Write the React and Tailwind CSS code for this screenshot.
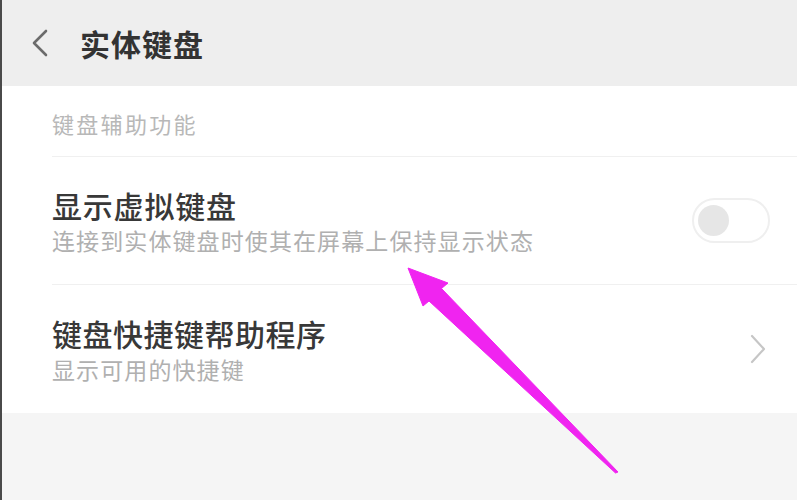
export default function App() {
	return (
		<div className="relative flex h-[500px] w-full flex-col overflow-hidden border-l-2 border-[#4a4a4a] bg-[#f5f5f5] font-['Noto_Sans_CJK_SC',sans-serif]">
			{/* header */}
			<div className="flex h-[86px] items-center bg-[#eeeeee] pl-[28px]">
				<svg width="20" height="30" viewBox="0 0 20 30" fill="none">
					<path d="M16 3 L4 15 L16 27" stroke="#6b6b6b" strokeWidth="2.6" strokeLinecap="round" strokeLinejoin="round" />
				</svg>
				<h1 className="ml-[30px] text-[30px] font-semibold tracking-[1px] text-[#333333]">实体键盘</h1>
			</div>

			<div className="bg-white">
				<div className="ml-[50px] flex h-[71px] items-center border-b border-[#f0f0f0] pt-[4px]">
					<span className="text-[22px] tracking-[2.3px] text-[#b8b8b8]">键盘辅助功能</span>
				</div>

				<div className="ml-[50px] flex h-[128px] items-center justify-between border-b border-[#f0f0f0] pr-[27px]">
					<div className="flex flex-col">
						<span className="text-[30px] font-medium leading-[36px] tracking-[0.8px] text-[#383838]">显示虚拟键盘</span>
						<span className="mt-[3px] text-[23px] leading-[28px] tracking-[1.1px] text-[#b0b0b0]">连接到实体键盘时使其在屏幕上保持显示状态</span>
					</div>
					<div className="flex h-[45px] w-[78px] items-center rounded-full border-2 border-[#efefef] bg-white px-[4px]">
						<div className="h-[31px] w-[31px] rounded-full bg-[#e6e6e6]" />
					</div>
				</div>

				<div className="ml-[50px] flex h-[128px] items-center justify-between pr-[30px]">
					<div className="flex flex-col">
						<span className="text-[30px] font-medium leading-[36px] tracking-[0.5px] text-[#383838]">键盘快捷键帮助程序</span>
						<span className="mt-[4px] text-[23px] leading-[28px] tracking-[1.1px] text-[#b0b0b0]">显示可用的快捷键</span>
					</div>
					<svg width="18" height="32" viewBox="0 0 18 32" fill="none">
						<path d="M3 3 L15 16 L3 29" stroke="#c6c6c6" strokeWidth="2.2" strokeLinecap="round" strokeLinejoin="round" />
					</svg>
				</div>
			</div>

			{/* annotation arrow */}
			<svg className="pointer-events-none absolute left-[-2px] top-0" width="797" height="500" viewBox="0 0 797 500">
				<polygon
					points="408,268 448,283 441.5,288.5 618,472 615.5,473 429,301 423,306"
					fill="#f024f0"
					stroke="#f024f0"
					strokeWidth="1"
					strokeLinejoin="round"
				/>
			</svg>
		</div>
	);
}
